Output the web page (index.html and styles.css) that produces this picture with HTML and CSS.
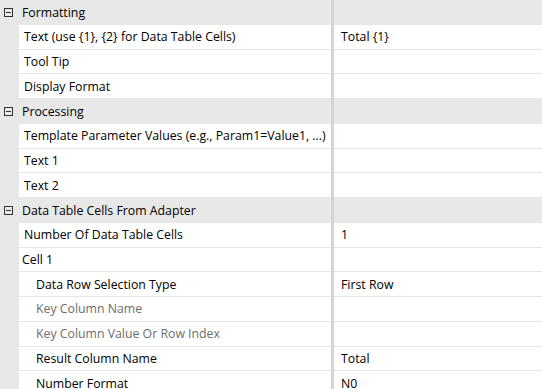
FILE: index.html
```html
<!DOCTYPE html>
<html lang="en">
<head>
    <meta charset="UTF-8">
    <title>Property Grid</title>
    <link rel="stylesheet" href="styles.css">
</head>
<body>
    <div class="grid">
        <div class="row cat">
            <div class="gutter"><span class="toggle"></span></div>
            <div class="name">Formatting</div>
            <div class="divider"></div>
            <div class="value"></div>
        </div>
        <div class="row item">
            <div class="gutter"></div>
            <div class="name">Text (use {1}, {2} for Data Table Cells)</div>
            <div class="divider"></div>
            <div class="value">Total {1}</div>
        </div>
        <div class="row item">
            <div class="gutter"></div>
            <div class="name">Tool Tip</div>
            <div class="divider"></div>
            <div class="value"></div>
        </div>
        <div class="row item">
            <div class="gutter"></div>
            <div class="name">Display Format</div>
            <div class="divider"></div>
            <div class="value"></div>
        </div>
        <div class="row cat">
            <div class="gutter"><span class="toggle"></span></div>
            <div class="name">Processing</div>
            <div class="divider"></div>
            <div class="value"></div>
        </div>
        <div class="row item">
            <div class="gutter"></div>
            <div class="name">Template Parameter Values (e.g., Param1=Value1, ...)</div>
            <div class="divider"></div>
            <div class="value"></div>
        </div>
        <div class="row item">
            <div class="gutter"></div>
            <div class="name">Text 1</div>
            <div class="divider"></div>
            <div class="value"></div>
        </div>
        <div class="row item">
            <div class="gutter"></div>
            <div class="name">Text 2</div>
            <div class="divider"></div>
            <div class="value"></div>
        </div>
        <div class="row cat">
            <div class="gutter"><span class="toggle"></span></div>
            <div class="name">Data Table Cells From Adapter</div>
            <div class="divider"></div>
            <div class="value"></div>
        </div>
        <div class="row item">
            <div class="gutter"></div>
            <div class="name">Number Of Data Table Cells</div>
            <div class="divider"></div>
            <div class="value">1</div>
        </div>
        <div class="row item">
            <div class="gutter"></div>
            <div class="name group">Cell 1</div>
            <div class="divider"></div>
            <div class="value"></div>
        </div>
        <div class="row item">
            <div class="gutter"></div>
            <div class="name sub">Data Row Selection Type</div>
            <div class="divider"></div>
            <div class="value">First Row</div>
        </div>
        <div class="row item">
            <div class="gutter"></div>
            <div class="name sub disabled">Key Column Name</div>
            <div class="divider"></div>
            <div class="value"></div>
        </div>
        <div class="row item">
            <div class="gutter"></div>
            <div class="name sub disabled">Key Column Value Or Row Index</div>
            <div class="divider"></div>
            <div class="value"></div>
        </div>
        <div class="row item">
            <div class="gutter"></div>
            <div class="name sub">Result Column Name</div>
            <div class="divider"></div>
            <div class="value">Total</div>
        </div>
        <div class="row item">
            <div class="gutter"></div>
            <div class="name sub">Number Format</div>
            <div class="divider"></div>
            <div class="value">N0</div>
        </div>
    </div>
</body>
</html>
```

FILE: styles.css
```css
body {
    margin: 0;
    font-family: "Open Sans", "Noto Sans", sans-serif;
    font-size: 12.3px;
    color: #000;
    background-color: #fff;
    overflow: hidden;
}
.grid {
    width: 542px;
}
.row {
    display: flex;
    height: 24.75px;
}
.gutter {
    width: 19px;
    flex-shrink: 0;
    background-color: #e8e8e8;
    display: flex;
    align-items: center;
    justify-content: center;
    padding-right: 3px;
    box-sizing: border-box;
}
.toggle {
    width: 9px;
    height: 9px;
    box-sizing: border-box;
    border: 1px solid #333;
    position: relative;
}
.toggle::after {
    content: "";
    position: absolute;
    left: 1px;
    right: 1px;
    top: 3px;
    height: 1px;
    background-color: #333;
}
.name {
    width: 312px;
    flex-shrink: 0;
    display: flex;
    align-items: center;
    padding-left: 5px;
    box-sizing: border-box;
    white-space: nowrap;
    overflow: hidden;
}
.divider {
    width: 3px;
    flex-shrink: 0;
    background-color: #d4d4d4;
}
.value {
    flex: 1;
    display: flex;
    align-items: center;
    padding-left: 7px;
    white-space: nowrap;
}
.cat {
    background-color: #e8e8e8;
}
.cat .name {
    padding-left: 3px;
}
.item .name, .item .value {
    background-color: #fff;
    border-bottom: 1px solid #e6e6e6;
}
.name.group {
    padding-left: 3px;
}
.name.sub {
    padding-left: 17px;
}
.disabled {
    color: #6d6d6d;
}
```
